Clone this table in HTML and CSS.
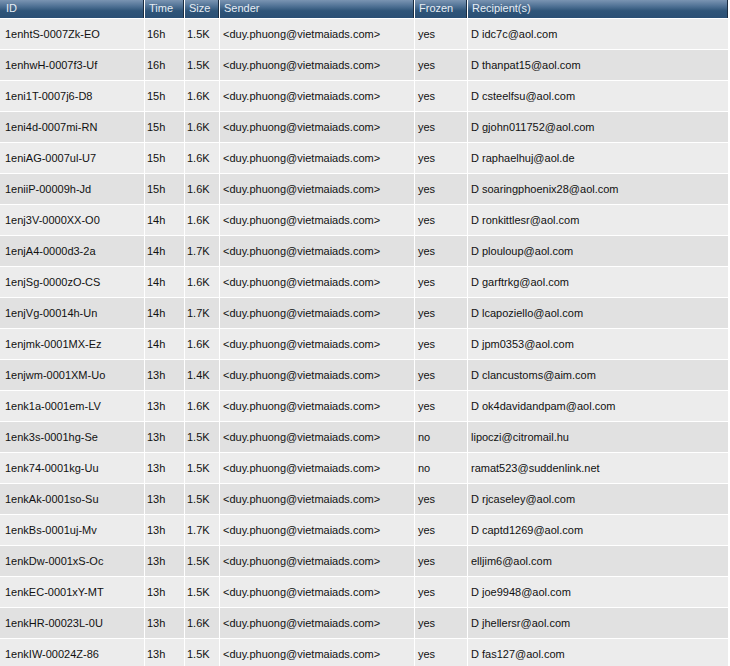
FILE: index.html
```html
<!DOCTYPE html>
<html>
<head>
<meta charset="utf-8">
<link rel="stylesheet" href="styles.css">
</head>
<body>
<table class="queue">
<colgroup>
<col class="c-id"><col class="c-time"><col class="c-size"><col class="c-sender"><col class="c-frozen"><col class="c-rcpt">
</colgroup>
<thead>
<tr><th>ID</th><th>Time</th><th>Size</th><th>Sender</th><th>Frozen</th><th>Recipient(s)</th></tr>
</thead>
<tbody>
<tr><td>1enhtS-0007Zk-EO</td><td>16h</td><td>1.5K</td><td>&lt;duy.phuong@vietmaiads.com&gt;</td><td>yes</td><td>D idc7c@aol.com</td></tr>
<tr><td>1enhwH-0007f3-Uf</td><td>16h</td><td>1.5K</td><td>&lt;duy.phuong@vietmaiads.com&gt;</td><td>yes</td><td>D thanpat15@aol.com</td></tr>
<tr><td>1eni1T-0007j6-D8</td><td>15h</td><td>1.6K</td><td>&lt;duy.phuong@vietmaiads.com&gt;</td><td>yes</td><td>D csteelfsu@aol.com</td></tr>
<tr><td>1eni4d-0007mi-RN</td><td>15h</td><td>1.6K</td><td>&lt;duy.phuong@vietmaiads.com&gt;</td><td>yes</td><td>D gjohn011752@aol.com</td></tr>
<tr><td>1eniAG-0007ul-U7</td><td>15h</td><td>1.6K</td><td>&lt;duy.phuong@vietmaiads.com&gt;</td><td>yes</td><td>D raphaelhuj@aol.de</td></tr>
<tr><td>1eniiP-00009h-Jd</td><td>15h</td><td>1.6K</td><td>&lt;duy.phuong@vietmaiads.com&gt;</td><td>yes</td><td>D soaringphoenix28@aol.com</td></tr>
<tr><td>1enj3V-0000XX-O0</td><td>14h</td><td>1.6K</td><td>&lt;duy.phuong@vietmaiads.com&gt;</td><td>yes</td><td>D ronkittlesr@aol.com</td></tr>
<tr><td>1enjA4-0000d3-2a</td><td>14h</td><td>1.7K</td><td>&lt;duy.phuong@vietmaiads.com&gt;</td><td>yes</td><td>D plouloup@aol.com</td></tr>
<tr><td>1enjSg-0000zO-CS</td><td>14h</td><td>1.6K</td><td>&lt;duy.phuong@vietmaiads.com&gt;</td><td>yes</td><td>D garftrkg@aol.com</td></tr>
<tr><td>1enjVg-00014h-Un</td><td>14h</td><td>1.7K</td><td>&lt;duy.phuong@vietmaiads.com&gt;</td><td>yes</td><td>D lcapoziello@aol.com</td></tr>
<tr><td>1enjmk-0001MX-Ez</td><td>14h</td><td>1.6K</td><td>&lt;duy.phuong@vietmaiads.com&gt;</td><td>yes</td><td>D jpm0353@aol.com</td></tr>
<tr><td>1enjwm-0001XM-Uo</td><td>13h</td><td>1.4K</td><td>&lt;duy.phuong@vietmaiads.com&gt;</td><td>yes</td><td>D clancustoms@aim.com</td></tr>
<tr><td>1enk1a-0001em-LV</td><td>13h</td><td>1.6K</td><td>&lt;duy.phuong@vietmaiads.com&gt;</td><td>yes</td><td>D ok4davidandpam@aol.com</td></tr>
<tr><td>1enk3s-0001hg-Se</td><td>13h</td><td>1.5K</td><td>&lt;duy.phuong@vietmaiads.com&gt;</td><td>no</td><td>lipoczi@citromail.hu</td></tr>
<tr><td>1enk74-0001kg-Uu</td><td>13h</td><td>1.5K</td><td>&lt;duy.phuong@vietmaiads.com&gt;</td><td>no</td><td>ramat523@suddenlink.net</td></tr>
<tr><td>1enkAk-0001so-Su</td><td>13h</td><td>1.5K</td><td>&lt;duy.phuong@vietmaiads.com&gt;</td><td>yes</td><td>D rjcaseley@aol.com</td></tr>
<tr><td>1enkBs-0001uj-Mv</td><td>13h</td><td>1.7K</td><td>&lt;duy.phuong@vietmaiads.com&gt;</td><td>yes</td><td>D captd1269@aol.com</td></tr>
<tr><td>1enkDw-0001xS-Oc</td><td>13h</td><td>1.5K</td><td>&lt;duy.phuong@vietmaiads.com&gt;</td><td>yes</td><td>elljim6@aol.com</td></tr>
<tr><td>1enkEC-0001xY-MT</td><td>13h</td><td>1.5K</td><td>&lt;duy.phuong@vietmaiads.com&gt;</td><td>yes</td><td>D joe9948@aol.com</td></tr>
<tr><td>1enkHR-00023L-0U</td><td>13h</td><td>1.6K</td><td>&lt;duy.phuong@vietmaiads.com&gt;</td><td>yes</td><td>D jhellersr@aol.com</td></tr>
<tr><td>1enkIW-00024Z-86</td><td>13h</td><td>1.5K</td><td>&lt;duy.phuong@vietmaiads.com&gt;</td><td>yes</td><td>D fas127@aol.com</td></tr>
</tbody>
</table>
</body>
</html>
```

FILE: styles.css
```css
html, body {
  margin: 0;
  padding: 0;
  background: #ffffff;
}
body {
  font-family: "Liberation Sans", Arial, sans-serif;
  font-size: 11px;
  color: #111111;
}
.queue {
  border-collapse: separate;
  border-spacing: 1px;
  margin: -1px 0 0 -1px;
  width: 730px;
  table-layout: fixed;
}
.c-id { width: 144px; }
.c-time { width: 39px; }
.c-size { width: 34px; }
.c-sender { width: 194px; }
.c-frozen { width: 52px; }
.c-rcpt { width: 260px; }
.queue th {
  height: 18px;
  padding: 0 0 0 4px;
  text-align: left;
  font-weight: normal;
  color: #e6edf4;
  background: linear-gradient(to bottom, #7a94b2 0%, #4f7194 35%, #2f5579 60%, #2a4f74 100%);
  border-right: 1px solid #1a2c40;
  box-sizing: border-box;
  vertical-align: top;
  line-height: 16px;
}
.queue th:first-child {
  padding-left: 6px;
}
.queue td {
  height: 30px;
  padding: 0 0 0 3px;
  white-space: nowrap;
  overflow: hidden;
  vertical-align: middle;
  background: #ececec;
}
.queue td:first-child {
  padding-left: 5px;
}
.queue td:nth-child(2),
.queue td:nth-child(3) {
  padding-left: 2px;
}
.queue tbody tr:nth-child(even) td {
  background: #e1e1e1;
}
```
